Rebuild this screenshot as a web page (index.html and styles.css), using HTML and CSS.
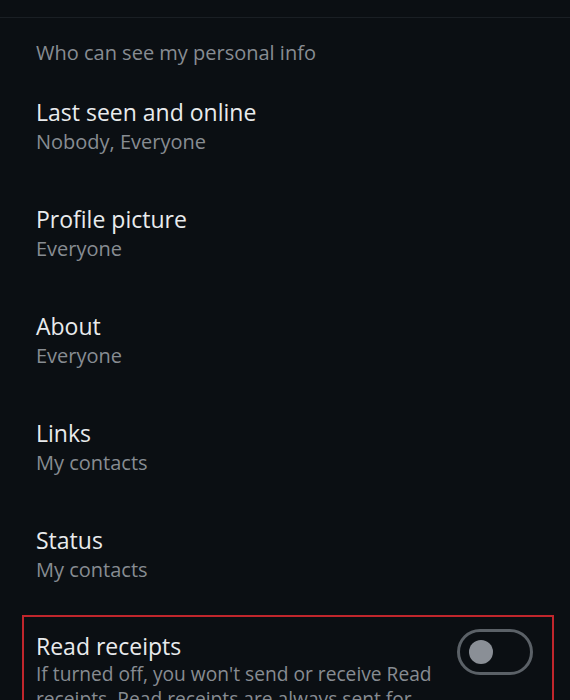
FILE: index.html
```html
<!DOCTYPE html>
<html>
<head>
<meta charset="utf-8">
<link rel="stylesheet" href="styles.css">
</head>
<body>
<div class="topbar"></div>
<div class="header">Who can see my personal info</div>
<div class="list">
  <div class="row"><div class="title">Last seen and online</div><div class="sub">Nobody, Everyone</div></div>
  <div class="row"><div class="title">Profile picture</div><div class="sub">Everyone</div></div>
  <div class="row"><div class="title">About</div><div class="sub">Everyone</div></div>
  <div class="row"><div class="title">Links</div><div class="sub">My contacts</div></div>
  <div class="row"><div class="title">Status</div><div class="sub">My contacts</div></div>
</div>
<div class="highlight">
  <div class="receipts">
    <div class="text">
      <div class="title">Read receipts</div>
      <div class="desc">If turned off, you won't send or receive Read receipts. Read receipts are always sent for group chats.</div>
    </div>
    <div class="toggle"><span class="knob"></span></div>
  </div>
</div>
</body>
</html>
```
FILE: styles.css
```css
html, body {
  margin: 0;
  padding: 0;
  background: #0b0f13;
  font-family: "Open Sans", "Noto Sans", sans-serif;
}
body {
  width: 570px;
  height: 700px;
  overflow: hidden;
}
.topbar {
  height: 17px;
  border-bottom: 1px solid #1a1f24;
}
.header {
  padding: 20px 36px 0;
  height: 30px;
  line-height: 30px;
  font-size: 20px;
  color: #878c92;
  margin-bottom: 29px;
}
.list {
  display: flex;
  flex-direction: column;
  gap: 47px;
  padding: 0 36px;
}
.title {
  font-size: 23px;
  line-height: 30px;
  color: #e9ebed;
}
.sub {
  font-size: 20px;
  line-height: 30px;
  color: #878c92;
}
.highlight {
  margin: 30px 16px 0 22px;
  border: 2px solid #c1262c;
  border-bottom: none;
  padding: 14px 19px 20px 12px;
}
.receipts {
  display: flex;
  align-items: flex-start;
  gap: 8px;
}
.text {
  flex: 1;
}
.desc {
  font-size: 19.2px;
  line-height: 25px;
  color: #878c92;
}
.toggle {
  flex: none;
  height: 40px;
  width: 61px;
  border: 3px solid #5b6167;
  border-radius: 23px;
  margin-top: -2px;
  display: flex;
  align-items: center;
  padding-left: 9px;
  box-sizing: content-box;
}
.knob {
  width: 24px;
  height: 24px;
  border-radius: 50%;
  background: #8a8f96;
}
```
